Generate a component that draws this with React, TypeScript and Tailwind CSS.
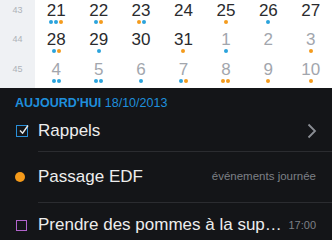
import React from "react";

type Day = { n: number; muted?: boolean; dots: ("b" | "o")[] };

const weeks: { wk: number; days: Day[] }[] = [
  {
    wk: 43,
    days: [
      { n: 21, dots: ["b", "b", "o"] },
      { n: 22, dots: ["b", "o"] },
      { n: 23, dots: ["o", "b"] },
      { n: 24, dots: [] },
      { n: 25, dots: ["o"] },
      { n: 26, dots: ["b"] },
      { n: 27, dots: [] },
    ],
  },
  {
    wk: 44,
    days: [
      { n: 28, dots: ["b", "o"] },
      { n: 29, dots: ["b"] },
      { n: 30, dots: [] },
      { n: 31, dots: ["o"] },
      { n: 1, muted: true, dots: ["b"] },
      { n: 2, muted: true, dots: [] },
      { n: 3, muted: true, dots: ["o"] },
    ],
  },
  {
    wk: 45,
    days: [
      { n: 4, muted: true, dots: ["b", "b"] },
      { n: 5, muted: true, dots: ["b", "b"] },
      { n: 6, muted: true, dots: ["b"] },
      { n: 7, muted: true, dots: ["b", "o"] },
      { n: 8, muted: true, dots: ["o", "o"] },
      { n: 9, muted: true, dots: ["o"] },
      { n: 10, muted: true, dots: ["o"] },
    ],
  },
];

function Dots({ dots }: { dots: ("b" | "o")[] }) {
  return (
    <div className="flex h-[4px] gap-[1px] mt-[1px]">
      {dots.map((d, i) => (
        <span
          key={i}
          className={
            "block w-[4px] h-[4px] rounded-full " +
            (d === "b" ? "bg-[#2ba3dc]" : "bg-[#f49b1d]")
          }
        />
      ))}
    </div>
  );
}

export default function App() {
  return (
    <div
      className="w-[332px] h-[240px] overflow-hidden bg-[#141518]"
      style={{ fontFamily: '"Liberation Sans", Arial, sans-serif' }}
    >
      {/* calendar */}
      <div className="h-[88px] flex bg-white overflow-hidden">
        <div className="w-[35px] bg-[#eff1f4] flex flex-col">
          {weeks.map((w) => (
            <div key={w.wk} className="h-[30px] flex justify-center pt-[5px]">
              <span className="text-[9px] leading-[10px] text-[#aeb2b8]">{w.wk}</span>
            </div>
          ))}
        </div>
        <div className="flex-1 flex flex-col">
          {weeks.map((w) => (
            <div key={w.wk} className="h-[30px] grid grid-cols-7">
              {w.days.map((d) => (
                <div key={d.n} className="flex flex-col items-center pt-[2px]">
                  <span
                    className={
                      "text-[17px] leading-[17px] " +
                      (d.muted ? "text-[#a2a6ad]" : "text-[#2a2b2e]")
                    }
                  >
                    {d.n}
                  </span>
                  <Dots dots={d.dots} />
                </div>
              ))}
            </div>
          ))}
        </div>
      </div>

      {/* today list */}
      <div className="h-[22px] pt-[9px] pl-[15px] text-[12.5px] leading-[12px] text-[#1f8fdc] whitespace-nowrap">
        <span className="font-bold">AUJOURD'HUI</span> 18/10/2013
      </div>

      <div className="h-[41px] flex items-center pl-[16px] pr-[15px]">
        <span className="w-[12px] h-[12px] border border-[#2a8fd8] relative shrink-0">
          <svg viewBox="0 0 12 12" className="absolute left-[1px] -top-[2px] w-[12px] h-[12px]">
            <path d="M2 6.5 L4.6 9.2 L10 1.5" fill="none" stroke="#e8e8e8" strokeWidth="1.4" />
          </svg>
        </span>
        <span className="ml-[10px] flex-1 text-[17px] text-[#ededed]">Rappels</span>
        <svg viewBox="0 0 10 16" className="w-[10px] h-[16px]">
          <path d="M1.5 1.5 L8 8 L1.5 14.5" fill="none" stroke="#8b8e94" strokeWidth="1.8" />
        </svg>
      </div>
      <div className="ml-[38px] h-px bg-[#2b2c30]" />

      <div className="h-[50px] flex items-center pl-[15px] pr-[16px]">
        <span className="w-[10px] h-[10px] rounded-full bg-[#f59a1a] shrink-0" />
        <span className="ml-[13px] flex-1 text-[17px] text-[#ededed]">Passage EDF</span>
        <span className="text-[11.5px] text-[#7d8086]">événements journée</span>
      </div>
      <div className="ml-[38px] h-px bg-[#2b2c30]" />

      <div className="h-[44px] flex items-center pl-[16px] pr-[16px]">
        <span className="w-[11px] h-[11px] border border-[#b163cb] shrink-0" />
        <span className="ml-[11px] flex-1 min-w-0 whitespace-nowrap text-[17px] text-[#ededed]">
          Prendre des pommes à la sup…
        </span>
        <span className="ml-[3px] text-[11px] text-[#7d8086]">17:00</span>
      </div>
    </div>
  );
}
